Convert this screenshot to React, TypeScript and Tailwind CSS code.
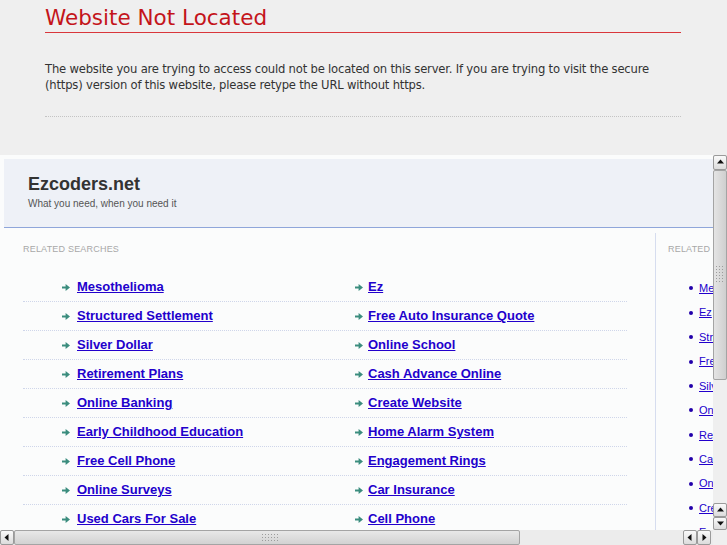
import React from "react";

const leftLinks = [
  "Mesothelioma",
  "Structured Settlement",
  "Silver Dollar",
  "Retirement Plans",
  "Online Banking",
  "Early Childhood Education",
  "Free Cell Phone",
  "Online Surveys",
  "Used Cars For Sale",
  "Credit Cards",
];

const rightLinks = [
  "Ez",
  "Free Auto Insurance Quote",
  "Online School",
  "Cash Advance Online",
  "Create Website",
  "Home Alarm System",
  "Engagement Rings",
  "Car Insurance",
  "Cell Phone",
  "Home Loans",
];

const sideLinks = [
  "Mesothelioma",
  "Ez",
  "Structured Settlement",
  "Free Auto Insurance Quote",
  "Silver Dollar",
  "Online School",
  "Retirement Plans",
  "Cash Advance Online",
  "Online Banking",
  "Create Website",
  "Early Childhood Education",
];

function Arrow() {
  return (
    <svg width="8" height="7" viewBox="0 0 8 7" className="shrink-0">
      <path d="M0 2.6h3.6V0L8 3.5 3.6 7V4.4H0z" fill="#3b8d7e" />
    </svg>
  );
}

function Tri({ dir }: { dir: "up" | "down" | "left" | "right" }) {
  const d = {
    up: "M1 5.5L4.5 1.5 8 5.5z",
    down: "M1 2.5L4.5 6.5 8 2.5z",
    left: "M5.5 1L1.5 4.5 5.5 8z",
    right: "M2.5 1L6.5 4.5 2.5 8z",
  }[dir];
  return (
    <svg width="9" height="9" viewBox="0 0 9 9">
      <path d={d} fill="#111" />
    </svg>
  );
}

function SbButton({ dir, className }: { dir: "up" | "down" | "left" | "right"; className: string }) {
  return (
    <div
      className={`flex items-center justify-center rounded-[2px] border border-[#9a9a9a] bg-gradient-to-b from-[#fafafa] to-[#dcdcdc] ${className}`}
    >
      <Tri dir={dir} />
    </div>
  );
}

function Grip({ className }: { className: string }) {
  return (
    <div
      className={`bg-[radial-gradient(circle,#9c9c9c_0.7px,transparent_0.9px)] bg-[length:3px_3px] ${className}`}
    />
  );
}

export default function App() {
  return (
    <div className="w-[727px] h-[545px] overflow-hidden bg-[#efefef] flex flex-col">
      {/* notice */}
      <div className="px-[45px] h-[155px] shrink-0 font-['DejaVu_Sans',sans-serif]">
        <div className="w-[636px]">
          <h1 className="mt-[4px] pb-[1px] text-[21.5px] leading-[27px] text-[#c4141a] border-b border-[#d9363b]">
            Website Not Located
          </h1>
          <p className="mt-[28px] text-[11.6px] leading-[16px] tracking-[-0.2px] text-[#333]">
            The website you are trying to access could not be located on this server. If you are trying to visit the secure
            (https) version of this website, please retype the URL without https.
          </p>
          <div className="mt-[23px] border-t border-dotted border-[#c4c4c4]" />
        </div>
      </div>

      {/* framed page */}
      <div className="flex flex-col h-[390px] font-['Liberation_Sans',Arial,sans-serif]">
        <div className="flex h-[375px]">
          <div className="w-[713px] overflow-hidden bg-[#fbfcfc] pt-[4px] pl-[4px]">
            <div className="w-[760px] h-[69px] bg-[#eef1f7] border-b border-[#8fa6da] pl-[24px] pt-[14px]">
              <div className="text-[18px] leading-[22px] font-bold text-[#333]">Ezcoders.net</div>
              <div className="mt-[3px] text-[10px] leading-[12px] text-[#555]">What you need, when you need it</div>
            </div>
            <div className="flex w-[760px]">
              <div className="w-[651px] shrink-0 pl-[19px]">
                <div className="mt-[15px] text-[9px] leading-[12px] tracking-[0.2px] text-[#a8a8a8]">RELATED SEARCHES</div>
                <div className="mt-[18px] w-[604px]">
                  {leftLinks.map((l, i) => (
                    <div key={l} className="flex h-[29px] items-center border-b border-dotted border-[#cfd6ea]">
                      <div className="w-[293px] pl-[39px] flex items-center gap-[7px]">
                        <Arrow />
                        <a href="#" className="text-[13px] font-bold text-[#2200cc] underline">{l}</a>
                      </div>
                      <div className="w-[293px] pl-[39px] flex items-center gap-[5px]">
                        <Arrow />
                        <a href="#" className="text-[13px] font-bold text-[#2200cc] underline">{rightLinks[i]}</a>
                      </div>
                    </div>
                  ))}
                </div>
              </div>
              <div className="mt-[5px] border-l border-[#d6ddef] pl-[12px] flex-1">
                <div className="mt-[10px] text-[9px] leading-[12px] tracking-[0.2px] text-[#a8a8a8]">RELATED SEARCHES</div>
                <ul className="mt-[21px] pl-[21px]">
                  {sideLinks.map((l) => (
                    <li key={l} className="h-[24.44px] flex items-center gap-[6px] whitespace-nowrap">
                      <span className="w-[4px] h-[4px] rounded-full bg-[#2200aa]" />
                      <a href="#" className="text-[11px] text-[#2200cc] underline">{l}</a>
                    </li>
                  ))}
                </ul>
              </div>
            </div>
          </div>
          {/* vertical scrollbar */}
          <div className="w-[14px] flex flex-col bg-[#e6e6e6]">
            <SbButton dir="up" className="h-[15px]" />
            <div className="h-[210px] rounded-[2px] border border-[#a4a4a4] bg-gradient-to-r from-[#e4e4e4] to-[#cfcfcf] flex flex-col items-center pt-[94px]">
              <Grip className="w-[10px] h-[17px]" />
            </div>
            <div className="flex-1 bg-[#efefef]" />
            <SbButton dir="up" className="h-[14px]" />
            <SbButton dir="down" className="h-[13px]" />
          </div>
        </div>
        {/* horizontal scrollbar */}
        <div className="flex h-[15px]">
          <div className="w-[713px] flex bg-[#ececec]">
            <SbButton dir="left" className="w-[14px]" />
            <div className="w-[506px] rounded-[2px] border border-[#a4a4a4] bg-gradient-to-b from-[#e8e8e8] to-[#d2d2d2] flex items-center pl-[246px]">
              <Grip className="w-[17px] h-[10px]" />
            </div>
            <div className="flex-1" />
            <SbButton dir="left" className="w-[14px]" />
            <SbButton dir="right" className="w-[14px]" />
            <div className="w-[2px]" />
          </div>
          <div className="w-[14px] bg-[#efefef]" />
        </div>
      </div>
    </div>
  );
}
